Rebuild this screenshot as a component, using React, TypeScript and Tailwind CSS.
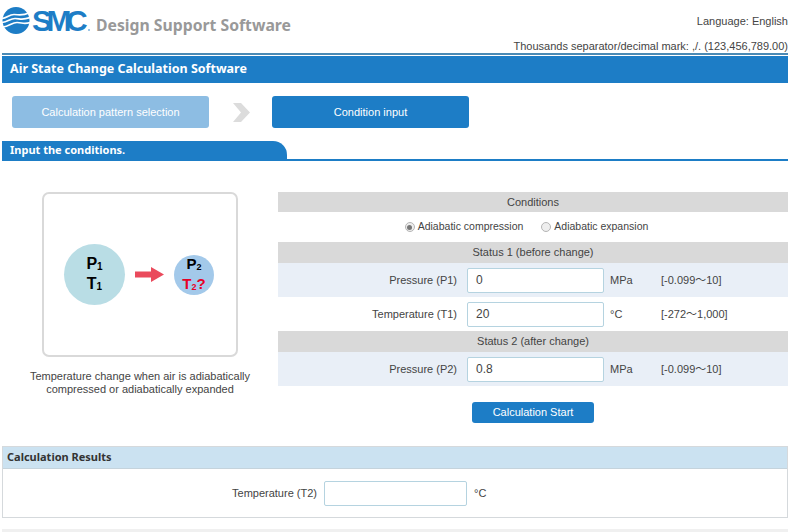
const font = "font-['Liberation_Sans','Noto_Sans_CJK_JP',sans-serif]"
const heading = "font-['Noto_Sans',sans-serif] font-bold"

function Logo() {
  return (
    <div className="flex h-[27px] w-[90px] items-center">
      <svg width="28" height="27" viewBox="0 0 28 27" className="shrink-0">
        <circle cx="14" cy="13.5" r="13.5" fill="#1d7dc6" />
        <g fill="none" stroke="#fff" strokeWidth="1.7">
          <path d="M0 11.5 C5 11 7 7.5 12 7.5 S19 9.5 28 5.5" />
          <path d="M0 15.5 C6 15 8 11.5 13 11.5 S20 13.5 28 10.5" />
          <path d="M1 20 C7 19.5 10 15.5 15 15.5 S22 17.5 28 15.5" />
        </g>
      </svg>
      <span className="ml-[2px] text-[30px] font-bold leading-none tracking-[-5.5px] text-[#1d7dc6]">SMC</span>
      <span className="mb-[3px] ml-[6px] h-[2px] w-[2px] self-end rounded-full bg-[#7fb5de]" />
    </div>
  )
}

function SectionBar({ children, tall }: { children: React.ReactNode; tall?: boolean }) {
  return <div className={`flex items-center justify-center bg-[#d9d9d9] text-[11px] text-[#444] ${tall ? 'h-[21px]' : 'h-[20px]'}`}>{children}</div>
}

function Field({ label, value, unit, range, shaded }: { label: string; value: string; unit: string; range: string; shaded?: boolean }) {
  return (
    <div className={`flex h-[34px] items-center text-[11px] text-[#444] ${shaded ? 'bg-[#e9eff7]' : 'bg-white'}`}>
      <div className="w-[189px] pr-[10px] text-right">{label}</div>
      <div className="flex h-[25px] w-[137px] items-center rounded-[2px] border border-[#b5d3e0] bg-white pl-2 text-[12px]">{value}</div>
      <div className="w-[57px] pl-[6px]">{unit}</div>
      <div>{range}</div>
    </div>
  )
}

function Radio({ checked, label }: { checked?: boolean; label: string }) {
  return (
    <div className="flex items-center gap-[3px]">
      <span className="flex h-[10px] w-[10px] items-center justify-center rounded-full border border-[#b5b5b5] bg-[#eee]">
        {checked && <span className="h-[5px] w-[5px] rounded-full bg-[#777]" />}
      </span>
      {label}
    </div>
  )
}

export default function App() {
  return (
    <div className={`h-[532px] w-[800px] overflow-hidden bg-white ${font}`}>
      <header className="flex h-[53px] justify-between pl-[2px] pr-[12px]">
        <div className="flex items-start pt-[7px]">
          <Logo />
          <span className={`${heading} ml-[4px] mt-[7px] text-[15.75px] leading-[22px] text-[#999]`}>Design Support Software</span>
        </div>
        <div className="text-right text-[11px] leading-[16px] text-[#444]">
          <div className="mt-[13px]">Language: English</div>
          <div className="mt-[9px]">Thousands separator/decimal mark: ,/. (123,456,789.00)</div>
        </div>
      </header>
      <div className="ml-[2px] mr-[12px] border-t-2 border-[#4a8ab5] pt-[1px]">
        <h1 className={`${heading} flex h-[27px] items-center bg-[#1d7dc6] pl-[8px] text-[12.5px] text-white`}>Air State Change Calculation Software</h1>
      </div>
      <div className="ml-[12px] mt-[13px] flex items-center">
        <div className="flex h-[32px] w-[197px] items-center justify-center rounded-[3px] bg-[#8dbde3] text-[11px] text-white">Calculation pattern selection</div>
        <svg width="17" height="19" viewBox="0 0 17 19" className="ml-[24px] mr-[22px]">
          <path d="M0 0h8l9 9.5-9 9.5H0l8-9.5z" fill="#dcdcdc" />
        </svg>
        <div className="flex h-[32px] w-[197px] items-center justify-center rounded-[3px] bg-[#1d7dc6] text-[11px] text-white">Condition input</div>
      </div>
      <div className="ml-[2px] mr-[12px] mt-[13px] border-b-2 border-[#1d7dc6]">
        <div className={`${heading} flex h-[18px] w-[285px] items-center rounded-tr-[14px] bg-[#1d7dc6] pl-[8px] text-[11px] text-white`}>Input the conditions.</div>
      </div>
      <main className="mt-[31px] flex h-[254px] pl-[42px] pr-[12px]">
        <div className="w-[196px] shrink-0">
          <div className="flex h-[165px] w-[196px] items-center rounded-[7px] border-2 border-[#d9d9d9] pl-[20px]">
            <div className="flex h-[61px] w-[61px] flex-col items-center justify-center rounded-full bg-[#b9dde5] text-[16px] font-bold leading-[18px] text-black">
              <span>P<span className="relative top-[1px] text-[10px]">1</span></span>
              <span>T<span className="relative top-[1px] text-[10px]">1</span></span>
            </div>
            <svg width="29" height="15" viewBox="0 0 29 15" className="ml-[10px] mr-[10px]">
              <path d="M0 4.5h16V0l13 7.5-13 7.5v-4.5H0z" fill="#ea4a5c" />
            </svg>
            <div className="flex h-[40px] w-[40px] flex-col items-center justify-center rounded-full bg-[#a3c9ea] text-[15px] font-bold leading-[17px] text-black">
              <span>P<span className="relative top-[1px] text-[9px]">2</span></span>
              <span className="text-[#e60026]">T<span className="relative top-[1px] text-[9px]">2</span>?</span>
            </div>
          </div>
          <p className="-mx-[20px] mt-[13px] text-center text-[11px] leading-[13px] text-[#444]">Temperature change when air is adiabatically<br />compressed or adiabatically expanded</p>
        </div>
        <div className="ml-[40px] flex-1">
          <SectionBar>Conditions</SectionBar>
          <div className="flex h-[30px] items-center justify-center gap-[18px] pr-[13px] text-[10.5px] text-[#444]">
            <Radio checked label="Adiabatic compression" />
            <Radio label="Adiabatic expansion" />
          </div>
          <SectionBar tall>Status 1 (before change)</SectionBar>
          <Field shaded label="Pressure (P1)" value="0" unit="MPa" range="[-0.099～10]" />
          <Field label="Temperature (T1)" value="20" unit="°C" range="[-272～1,000]" />
          <SectionBar tall>Status 2 (after change)</SectionBar>
          <Field shaded label="Pressure (P2)" value="0.8" unit="MPa" range="[-0.099～10]" />
          <div className="mt-[16px] flex justify-center">
            <button type="button" className="h-[21px] w-[122px] rounded-[3px] bg-[#1d7dc6] text-[11px] text-white">Calculation Start</button>
          </div>
        </div>
      </main>
      <section className="ml-[2px] mr-[12px] border border-[#d5d9dc]">
        <h2 className={`${heading} flex h-[22px] items-center border-b border-[#c5d3dc] bg-[#cbe2f1] pl-[4px] text-[11px] text-[#333]`}>Calculation Results</h2>
        <div className="flex h-[48px] items-center text-[11px] text-[#444]">
          <div className="w-[321px] pr-[7px] text-right">Temperature (T2)</div>
          <div className="h-[25px] w-[143px] rounded-[2px] border border-[#b5d3e0]" />
          <div className="pl-[7px]">°C</div>
        </div>
      </section>
      <div className="ml-[2px] mr-[12px] mt-[11px] h-[4px] bg-[#f0f0f0]" />
    </div>
  )
}
